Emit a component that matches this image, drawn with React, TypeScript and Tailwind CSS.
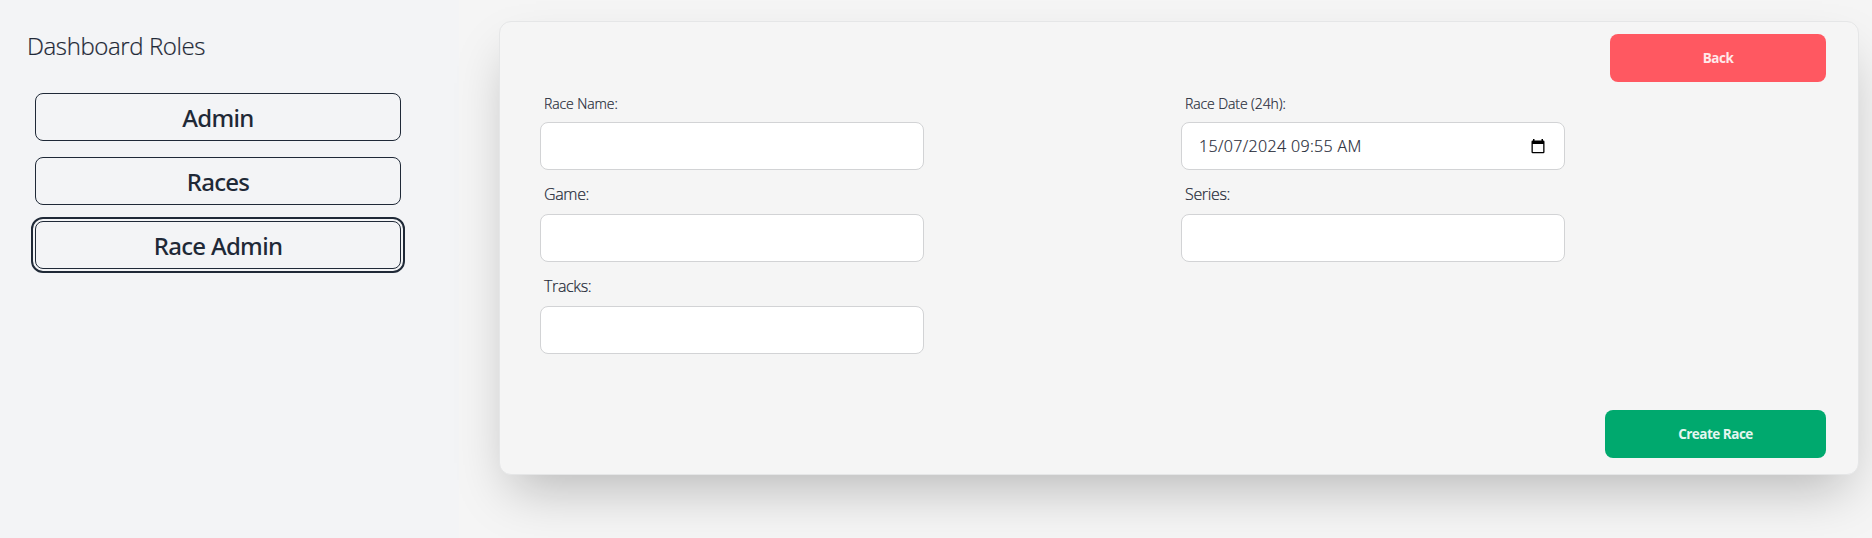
import type { ReactNode } from "react";

const roles = ["Admin", "Races", "Race Admin"];

function CalendarIcon() {
  return (
    <svg width="14" height="15" viewBox="0 0 14 15" fill="none" aria-hidden="true">
      <path d="M2 0h1.500v1.500h7V0H12v1.500h.3A1.200 1.200 0 0 1 13.500 2.700V13a1.200 1.200 0 0 1-1.200 1.200H1.700A1.200 1.200 0 0 1 .5 13V2.700A1.200 1.200 0 0 1 1.700 1.500H2zM1.800 5v8h10.400V5z" fill="#000" fillRule="evenodd" />
    </svg>
  );
}

function Field({ label, small, children }: { label: string; small?: boolean; children?: ReactNode }) {
  return (
    <div className="w-96">
      <div className={small ? "flex h-9 items-center px-1 text-sm tracking-[-0.1px]" : "flex h-11 items-center px-1 pt-[3px] text-base tracking-[-0.35px]"}>
        {label}
      </div>
      <div className="flex h-12 items-center justify-between rounded-lg border border-[#d2d3d5] bg-white pr-[19px] pl-[17px]">
        {children}
      </div>
    </div>
  );
}

export default function App() {
  return (
    <div className="flex h-[538px] w-full overflow-hidden bg-[#f5f5f5] font-['Open_Sans','Noto_Sans',sans-serif] font-light text-[#1f2937] [-webkit-text-stroke:0.2px]">
      <aside className="w-[459px] shrink-0 bg-[#f3f4f6] pt-7 pl-[27px]">
        <h1 className="h-9 text-2xl leading-9 tracking-[-0.4px]">Dashboard Roles</h1>
        <nav className="mt-[29px] ml-2 flex w-[366px] flex-col gap-4 font-['Noto_Sans','Open_Sans',sans-serif] [-webkit-text-stroke:0]">
          {roles.map((role) => (
            <button
              key={role}
              className={
                role === "Race Admin"
                  ? "h-12 rounded-lg border border-[#1f2937] pt-0.5 text-2xl font-medium tracking-[-0.7px] outline-2 outline-offset-2 outline-[#1f2937]"
                  : "h-12 rounded-lg border border-[#1f2937] pt-0.5 text-2xl font-medium tracking-[-0.7px]"
              }
            >
              {role}
            </button>
          ))}
        </nav>
      </aside>
      <main className="flex-1 pt-[21px] pr-[13px] pl-10">
        <section className="flex h-[454px] flex-col rounded-xl border border-[#e5e6e7] bg-[#f5f5f5] pt-3 pr-8 pb-4 pl-10 shadow-2xl">
          <button className="h-12 w-[216px] self-end rounded-lg bg-[#ff5861] text-[13.5px] font-bold tracking-[-0.5px] text-[#ffe9ea] [-webkit-text-stroke:0]">Back</button>
          <div className="mt-1 grid grid-cols-[641px_384px]">
            <Field label="Race Name:" small />
            <Field label="Race Date (24h):" small>
              <span className="tracking-[0.35px]">15/07/2024 09:55 AM</span>
              <CalendarIcon />
            </Field>
            <Field label="Game:" />
            <Field label="Series:" />
            <Field label="Tracks:" />
          </div>
          <button className="mt-auto h-12 w-[221px] self-end rounded-lg bg-[#00a96e] text-[13.5px] font-bold tracking-[-0.5px] text-[#e5f6f0] [-webkit-text-stroke:0]">
            Create Race
          </button>
        </section>
      </main>
    </div>
  );
}
